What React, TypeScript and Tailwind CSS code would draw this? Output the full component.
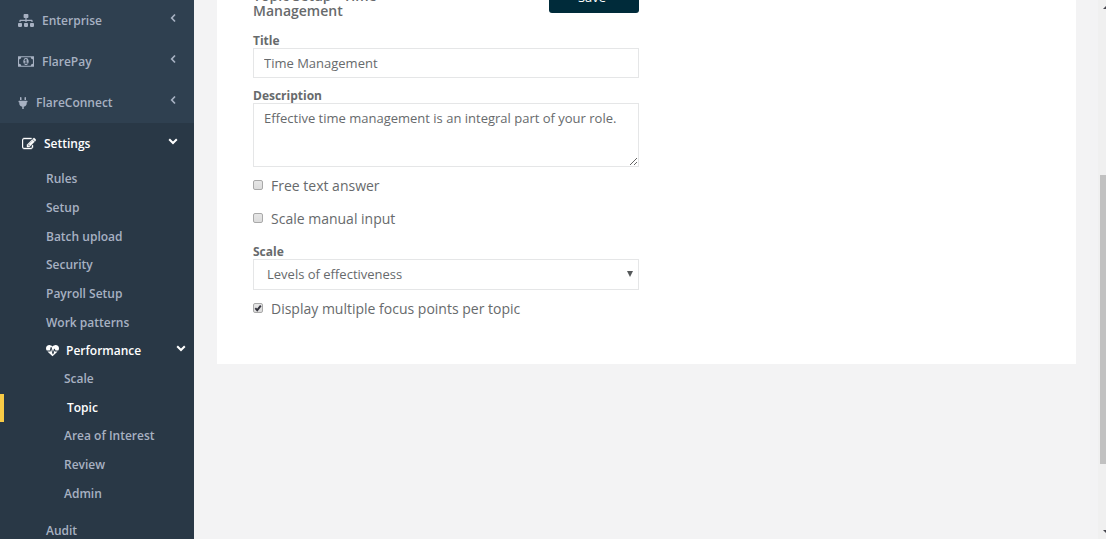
import { useState } from "react";
import type { ReactNode } from "react";
import { FaPlug, FaSitemap } from "react-icons/fa";
import { clsx } from "clsx";

const settingsLinks = [
	"Rules",
	"Setup",
	"Batch upload",
	"Security",
	"Payroll Setup",
	"Work patterns",
];

const performanceLinks = [
	"Scale",
	"Topic",
	"Area of Interest",
	"Review",
	"Admin",
];

const MoneyIcon = () => (
	<svg viewBox="0 0 1920 1792" fill="currentColor" className="w-4 h-[15px]">
		<path d="M768 1152h384v-96h-128v-448h-114l-148 137 77 80q42-37 55-57h2v288h-128v96zm512-256q0 70-21 142t-59.5 134-101.5 101-138 39-138-39-101.5-101-59.5-134-21-142 21-142 59.5-134 101.5-101 138-39 138 39 101.5 101 59.5 134 21 142zm512 256v-512q-106 0-181-75t-75-181h-1152q0 106-75 181t-181 75v512q106 0 181 75t75 181h1152q0-106 75-181t181-75zm128-832v1152q0 26-19 45t-45 19h-1792q-26 0-45-19t-19-45v-1152q0-26 19-45t45-19h1792q26 0 45 19t19 45z" />
	</svg>
);

const EditIcon = () => (
	<svg
		viewBox="0 0 1792 1792"
		fill="currentColor"
		stroke="currentColor"
		strokeWidth="50"
		className="size-[14px]"
	>
		<path d="M888 1184l116-116-152-152-116 116v56h96v96h56zm440-720q-16-16-33 1l-350 350q-17 17-1 33t33-1l350-350q17-17 1-33zm80 594v190q0 119-84.5 203.5t-203.5 84.5h-832q-119 0-203.5-84.5t-84.5-203.5v-832q0-119 84.5-203.5t203.5-84.5h832q63 0 117 25 15 7 18 23 3 17-9 29l-49 49q-14 14-32 8-23-6-45-6h-832q-66 0-113 47t-47 113v832q0 66 47 113t113 47h832q66 0 113-47t47-113v-126q0-13 9-22l64-64q15-15 35-7t20 29zm-96-738l288 288-672 672h-288v-288zm444 132l-92 92-288-288 92-92q28-28 68-28t68 28l152 152q28 28 28 68t-28 68z" />
	</svg>
);

const HeartbeatIcon = () => (
	<svg viewBox="0 0 1792 1792" fill="currentColor" className="size-[13px]">
		<path d="M1280 896h305q-5 6-10 10.5t-9 7.5l-3 4-623 600q-18 18-44 18t-44-18l-624-602q-5-2-21-20h369q22 0 39.5-13.5t22.5-34.5l70-281 190 667q6 20 23 33t39 13q21 0 38-13t23-33l146-485 56 112q18 35 57 35zm512-428q0 145-103 300h-369l-111-221q-8-17-25.5-27t-36.5-8q-45 5-56 46l-129 430-196-686q-6-20-23.5-33t-39.5-13-39 13.5-22 34.5l-116 464h-423q-103-155-103-300 0-220 127-344t351-124q62 0 126.5 21.5t120 58 95.5 68.5 76 68q36-36 76-68t95.5-68.5 120-58 126.5-21.5q224 0 351 124t127 344z" />
	</svg>
);

const Arrow = ({ open = false }: { open?: boolean }) => (
	<svg
		viewBox="0 0 10 10"
		fill="none"
		stroke="currentColor"
		strokeWidth={open ? 2 : 1.7}
		className="mb-[6px] ml-auto size-[10px]"
	>
		<path d={open ? "M1.2 3.2 5 7 8.8 3.2" : "M7 1.5 3.7 5 7 8.5"} />
	</svg>
);

const MenuItem = ({ icon, label }: { icon: ReactNode; label: string }) => (
	<li>
		<a href="#" className="flex items-center h-[41px] pl-[18px] pr-4">
			{icon}
			<span className="ml-2">{label}</span>
			<Arrow />
		</a>
	</li>
);

const CheckField = ({
	id,
	label,
	checked: initial = false,
}: {
	id: string;
	label: string;
	checked?: boolean;
}) => {
	const [checked, setChecked] = useState(initial);

	return (
		<div className="flex items-center h-[33px]">
			<span className="relative mb-[2px] size-[10px]">
				<input
					id={id}
					type="checkbox"
					checked={checked}
					onChange={(e) => setChecked(e.target.checked)}
					className="block appearance-none size-[10px] rounded-[2px] border border-[#a9a9a9] bg-linear-to-b from-[#e6e6e6] to-[#dcdcdc]"
				/>
				{checked && (
					<svg
						viewBox="0 0 10 10"
						className="absolute inset-0 pointer-events-none size-[10px]"
					>
						<path
							d="M2.3 5.2 4.2 7.2 7.8 2.6"
							fill="none"
							stroke="#33333d"
							strokeWidth="1.9"
						/>
					</svg>
				)}
			</span>
			<label htmlFor={id} className="pl-2 text-sm leading-5">
				{label}
			</label>
		</div>
	);
};

const Sidebar = () => (
	<nav className="w-[194px] shrink-0 overflow-hidden bg-[#2f4050] text-xs font-semibold text-[#a7b1c2]">
		<ul>
			<MenuItem icon={<FaSitemap className="w-4 h-[13px]" />} label="Enterprise" />
			<MenuItem icon={<MoneyIcon />} label="FlarePay" />
			<MenuItem icon={<FaPlug className="w-[10px] h-3" />} label="FlareConnect" />
			<li className="min-h-screen bg-[#293846]">
				<a
					href="#"
					className="flex items-center h-[41px] pl-[22px] pr-4 text-white"
				>
					<EditIcon />
					<span className="ml-2">Settings</span>
					<Arrow open />
				</a>
				<ul className="pt-px">
					<li>
						<ul className="grid h-[172px] auto-rows-fr">
							{settingsLinks.map((link) => (
								<li key={link}>
									<a href="#" className="flex items-center h-full pl-[46px]">
										{link}
									</a>
								</li>
							))}
						</ul>
					</li>
					<li>
						<a
							href="#"
							className="flex items-center h-7 pl-[46px] pr-2 text-white"
						>
							<HeartbeatIcon />
							<span className="ml-[7px]">Performance</span>
							<Arrow open />
						</a>
						<ul className="grid h-[143px] auto-rows-fr">
							{performanceLinks.map((link) => (
								<li key={link}>
									<a
										href="#"
										className={clsx(
											"flex items-center h-full",
											link === "Topic"
												? "border-l-4 border-[#f8cb46] pl-[63px] text-white"
												: "pl-16"
										)}
									>
										{link}
									</a>
								</li>
							))}
						</ul>
					</li>
					<li className="pt-[9px]">
						<a href="#" className="flex items-center h-7 pl-[46px]">
							Audit
						</a>
					</li>
				</ul>
			</li>
		</ul>
	</nav>
);

const Scrollbar = () => (
	<div className="flex overflow-hidden flex-col justify-between w-2 bg-[#f0f0f0] shrink-0">
		<svg viewBox="0 0 8 12" className="w-2 h-3">
			<path d="M5 9 8 6V9Z" fill="#45454d" />
		</svg>
		<div className="mt-[163px] mb-auto ml-[2px] h-[289px] bg-[#c1c1c1]" />
		<svg viewBox="0 0 8 12" className="w-2 h-3">
			<path d="M5 3H8V6Z" fill="#45454d" />
		</svg>
	</div>
);

const TopicForm = () => (
	<form className="w-full max-w-[386px]">
		<div className="flex justify-between items-end">
			<h5 className="w-[150px] text-sm leading-[15px] font-semibold">
				Topic Setup - Time Management
			</h5>
			<button
				type="button"
				className="mb-[5px] h-[30px] w-[90px] rounded-[3px] bg-[#002b3a] pr-1 text-[13px] text-white"
			>
				Save
			</button>
		</div>
		<label
			htmlFor="title"
			className="block pt-4 text-xs font-bold leading-[14px]"
		>
			Title
		</label>
		<input
			id="title"
			defaultValue="Time Management"
			className="block px-[10px] w-full h-[30px] border border-[#e5e6e7] bg-white text-[13px]"
		/>
		<label
			htmlFor="description"
			className="block pt-[11px] text-xs font-bold leading-[14px]"
		>
			Description
		</label>
		<textarea
			id="description"
			defaultValue="Effective time management is an integral part of your role."
			className="block px-[10px] py-[5px] w-full h-16 border border-[#e5e6e7] bg-white text-[13px] leading-[19px]"
		/>
		<div className="pt-[2px]">
			<CheckField id="free-text" label="Free text answer" />
			<CheckField id="manual-input" label="Scale manual input" />
		</div>
		<label
			htmlFor="scale"
			className="block pt-[10px] text-xs font-bold leading-[14px]"
		>
			Scale
		</label>
		<div className="relative">
			<select
				id="scale"
				className="block px-[13px] w-full h-[31px] appearance-none border border-[#e5e6e7] bg-white text-[13px]"
			>
				<option>Levels of effectiveness</option>
			</select>
			<svg
				viewBox="0 0 6 6"
				className="absolute right-[6px] top-3 pointer-events-none size-[6px]"
			>
				<path d="M0 0H6L3 6Z" fill="#55585a" />
			</svg>
		</div>
		<div className="pt-[2px]">
			<CheckField
				id="multiple-focus"
				label="Display multiple focus points per topic"
				checked
			/>
		</div>
	</form>
);

const App = () => {
	return (
		<div className="flex overflow-hidden h-screen bg-[#f3f3f4] font-['Open_Sans',sans-serif] text-[#676a6c]">
			<Sidebar />
			<main className="overflow-hidden flex-1 pr-[22px] pl-[23px]">
				<div className="-mt-[17px] bg-white px-9 pb-[39px]">
					<TopicForm />
				</div>
			</main>
			<Scrollbar />
		</div>
	);
};

export default App;
